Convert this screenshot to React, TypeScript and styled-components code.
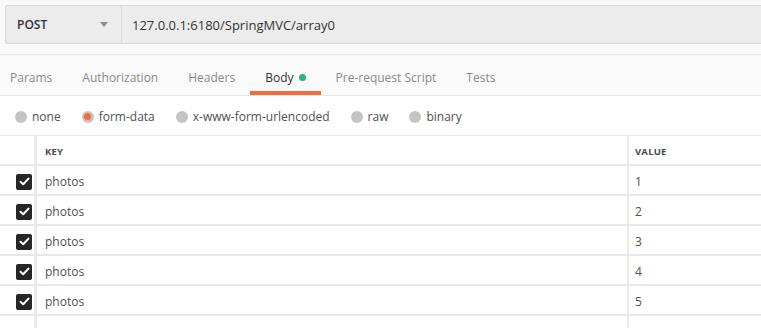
import styled, { createGlobalStyle } from "styled-components";

const GlobalStyle = createGlobalStyle`
  body {
    margin: 0;
    background: #ffffff;
    font-family: "Open Sans", "Liberation Sans", sans-serif;
    color: #505050;
  }
`;

export const Page = styled.div`
  width: 761px;
  height: 328px;
  overflow: hidden;
  background: #ffffff;
`;

export const UrlBar = styled.div`
  display: flex;
  padding: 5px 0 10px 5px;
  background: #f9f9f9;
  border-bottom: 1px solid #e6e6e6;
`;

export const UrlGroup = styled.div`
  display: flex;
  flex: 1;
  height: 37px;
  border: 1px solid #d8d8d8;
  border-right: none;
  border-radius: 3px 0 0 3px;
  background: #ececec;
`;

export const MethodSelect = styled.div`
  display: flex;
  align-items: center;
  justify-content: space-between;
  width: 116px;
  box-sizing: border-box;
  padding: 0 13px 0 11px;
  border-right: 1px solid #d8d8d8;
  font-size: 12px;
  font-weight: 600;
  color: #333333;
`;

export const Caret = styled.span`
  width: 0;
  height: 0;
  border-left: 4px solid transparent;
  border-right: 4px solid transparent;
  border-top: 5px solid #8c8c8c;
`;

export const UrlInput = styled.div`
  display: flex;
  align-items: center;
  flex: 1;
  padding-left: 10px;
  font-size: 13px;
  color: #333333;
`;

export const TabBar = styled.div`
  display: flex;
  height: 40px;
  background: #fafafa;
  border-bottom: 1px solid #e6e6e6;
`;

export const Tab = styled.div<{ $active?: boolean }>`
  display: flex;
  align-items: center;
  gap: 5px;
  padding: 5px 15px 0;
  font-size: 12px;
  color: ${(p) => (p.$active ? "#333333" : "#8a8a8a")};
  box-shadow: ${(p) => (p.$active ? "inset 0 -4px 0 #f26b3a" : "none")};
  &:first-child {
    padding-left: 10px;
  }
`;

export const Dot = styled.span`
  width: 7px;
  height: 7px;
  border-radius: 50%;
  background: #26b47f;
`;

export const ModeRow = styled.div`
  display: flex;
  align-items: center;
  gap: 21px;
  height: 37px;
  padding: 2px 0 0 15px;
  border-bottom: 1px solid #e8e8e8;
`;

export const Mode = styled.label`
  display: flex;
  align-items: center;
  gap: 5px;
  font-size: 12px;
  color: #505050;
`;

export const Radio = styled.span<{ $checked?: boolean }>`
  display: flex;
  align-items: center;
  justify-content: center;
  width: 12px;
  height: 12px;
  border-radius: 50%;
  background: #c4c4c4;
  &::after {
    content: "";
    display: ${(p) => (p.$checked ? "block" : "none")};
    width: 7px;
    height: 7px;
    border-radius: 50%;
    background: #f26b3a;
  }
`;

export const Table = styled.div`
  display: flex;
  flex-direction: column;
`;

export const Row = styled.div`
  display: grid;
  grid-template-columns: 37px 1fr 132px;
  height: 28px;
  border-bottom: 2px solid #e8e8e8;
`;

export const CheckCell = styled.div`
  display: flex;
  align-items: center;
  justify-content: flex-end;
  padding: 3px 2px 0 0;
  border-right: 3px solid #ebebeb;
`;

export const Cell = styled.div<{ $last?: boolean; $head?: boolean }>`
  display: flex;
  align-items: center;
  padding: ${(p) => (p.$head ? "2px" : "3px")} 0 0 ${(p) => (p.$last ? "6px" : "8px")};
  border-right: ${(p) => (p.$last ? "none" : "2px solid #ebebeb")};
  font-size: ${(p) => (p.$head ? "9.5px" : "12px")};
  font-weight: ${(p) => (p.$head ? 700 : 400)};
  color: ${(p) => (p.$head ? "#4a4a4a" : "#505050")};
  letter-spacing: ${(p) => (p.$head ? "0.2px" : "0")};
`;

export const CheckBox = styled.span`
  display: flex;
  align-items: center;
  justify-content: center;
  width: 16px;
  height: 16px;
  border-radius: 2px;
  background: #262626;
`;

const tabs = ["Params", "Authorization", "Headers", "Body", "Pre-request Script", "Tests"];
const modes = ["none", "form-data", "x-www-form-urlencoded", "raw", "binary"];
const params = [
  { key: "photos", value: "1" },
  { key: "photos", value: "2" },
  { key: "photos", value: "3" },
  { key: "photos", value: "4" },
  { key: "photos", value: "5" },
];

function App() {
  return (
    <Page>
      <GlobalStyle />
      <UrlBar>
        <UrlGroup>
          <MethodSelect>
            POST
            <Caret />
          </MethodSelect>
          <UrlInput>127.0.0.1:6180/SpringMVC/array0</UrlInput>
        </UrlGroup>
      </UrlBar>

      <TabBar>
        {tabs.map((tab) => (
          <Tab key={tab} $active={tab === "Body"}>
            {tab}
            {tab === "Body" && <Dot />}
          </Tab>
        ))}
      </TabBar>

      <ModeRow>
        {modes.map((mode) => (
          <Mode key={mode}>
            <Radio $checked={mode === "form-data"} />
            {mode}
          </Mode>
        ))}
      </ModeRow>

      <Table>
        <Row>
          <CheckCell />
          <Cell $head>KEY</Cell>
          <Cell $head $last>
            VALUE
          </Cell>
        </Row>
        {params.map((p) => (
          <Row key={p.value}>
            <CheckCell>
              <CheckBox>
                <svg width="11" height="9" viewBox="0 0 11 9">
                  <path
                    d="M1.5 4.8 L4.2 7.3 L9.5 1.6"
                    fill="none"
                    stroke="#ffffff"
                    strokeWidth="2"
                    strokeLinecap="round"
                    strokeLinejoin="round"
                  />
                </svg>
              </CheckBox>
            </CheckCell>
            <Cell>{p.key}</Cell>
            <Cell $last>{p.value}</Cell>
          </Row>
        ))}
        <Row>
          <CheckCell />
          <Cell />
          <Cell $last />
        </Row>
      </Table>
    </Page>
  );
}

export default App;
